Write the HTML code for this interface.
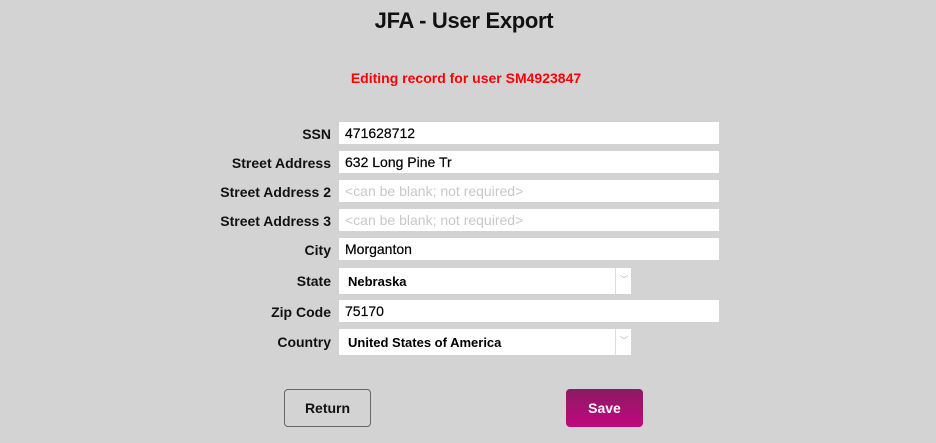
<!DOCTYPE html>
<html><head><style>
body{margin:0;width:936px;height:443px;background:#d3d3d3;font-family:"Liberation Sans",sans-serif;position:relative;overflow:hidden}
.a{position:absolute}
h1{position:absolute;left:0;width:928px;top:8px;margin:0;text-align:center;font-size:22px;font-weight:bold;color:#111;letter-spacing:-0.3px}
.red{left:0;width:932px;text-align:center;top:70px;color:#f00;font-weight:bold;font-size:14px}
.l{right:605px;font-weight:bold;font-size:14px;color:#111;text-align:right}
.i{left:339px;width:380px;height:22px;background:#fff;font-size:14px;line-height:22px;box-sizing:border-box;padding-left:6px;color:#000;-webkit-text-stroke:0.2px #000}
.ph{color:#c8c8c8;-webkit-text-stroke:0}
.s{left:339px;width:292px;height:26px;background:#fff;font-size:13px;font-weight:bold;line-height:28px;box-sizing:border-box;padding-left:9px}
.s:after{content:"";position:absolute;left:276px;top:0;width:1px;height:26px;background:#ddd}
.s span{position:absolute;left:281px;top:-2px;font-size:8px;color:#aaa;font-weight:normal}
.b{top:389px;height:38px;box-sizing:border-box;border-radius:4px;font-size:14px;font-weight:bold;text-align:center;line-height:36px}
</style></head><body>
<h1>JFA - User Export</h1>
<div class="a red">Editing record for user SM4923847</div>
<div class="a l" style="top:126px">SSN</div><div class="a i" style="top:122px">471628712</div>
<div class="a l" style="top:155px">Street Address</div><div class="a i" style="top:151px">632 Long Pine Tr</div>
<div class="a l" style="top:184px">Street Address 2</div><div class="a i ph" style="top:180px">&lt;can be blank; not required&gt;</div>
<div class="a l" style="top:213px">Street Address 3</div><div class="a i ph" style="top:209px">&lt;can be blank; not required&gt;</div>
<div class="a l" style="top:242px">City</div><div class="a i" style="top:238px">Morganton</div>
<div class="a l" style="top:273px">State</div><div class="a s" style="top:268px">Nebraska<span>﹀</span></div>
<div class="a l" style="top:304px">Zip Code</div><div class="a i" style="top:300px">75170</div>
<div class="a l" style="top:334px">Country</div><div class="a s" style="top:329px">United States of America<span>﹀</span></div>
<div class="a b" style="left:284px;width:87px;border:1px solid #666;color:#111">Return</div>
<div class="a b" style="left:566px;width:77px;background:linear-gradient(#8b1a64,#c0087f);color:#fff;line-height:38px">Save</div>
</body></html>
